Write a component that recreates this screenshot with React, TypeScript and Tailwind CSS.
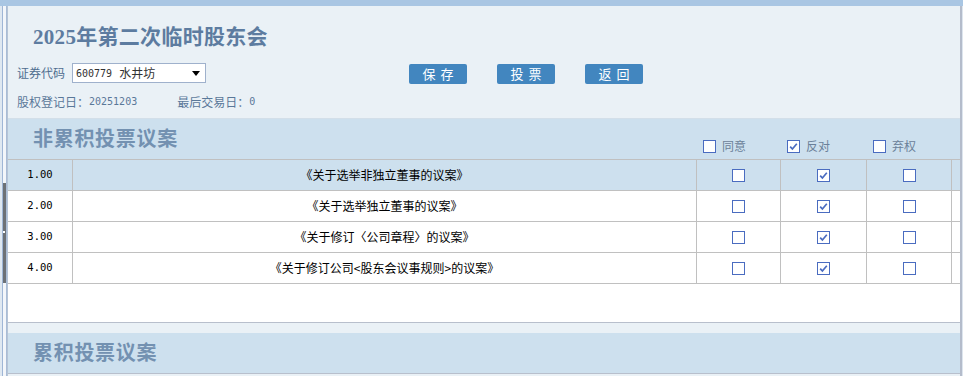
import React from "react";

const CJK = '"Noto Sans CJK SC", "Noto Sans", sans-serif';
const SERIF = '"Liberation Serif", "Noto Sans CJK SC", serif';
const MONO = '"DejaVu Sans Mono", "Noto Sans CJK SC", monospace';

function Box({ checked }: { checked?: boolean }) {
  return (
    <span className="inline-flex w-[13px] h-[13px] border border-[#4a6cc0] bg-white items-center justify-center shrink-0">
      {checked && (
        <svg width="11" height="11" viewBox="0 0 11 11">
          <path d="M2.2 5.6 L4.4 8 L8.8 2.8" fill="none" stroke="#4a6cc0" strokeWidth="1.7" />
        </svg>
      )}
    </span>
  );
}

const rows = [
  { no: "1.00", name: "《关于选举非独立董事的议案》", hl: true },
  { no: "2.00", name: "《关于选举独立董事的议案》" },
  { no: "3.00", name: "《关于修订〈公司章程〉的议案》" },
  { no: "4.00", name: "《关于修订公司<股东会议事规则>的议案》" },
];

const GRID = "grid grid-cols-[65px_624px_84px_86px_85px_8px]";

export default function App() {
  return (
    <div
      className="w-[963px] h-[376px] overflow-hidden bg-[#eaf1f6] flex flex-col"
      style={{ fontFamily: CJK }}
    >
      <div className="h-[6px] bg-[#a9c6e3] shrink-0" />
      <div className="flex flex-1 min-h-0">
        {/* left splitter strip */}
        <div className="w-[7px] flex shrink-0">
          <div className="w-[2px] bg-[#dfe8f1]" />
          <div className="w-[1px] bg-[#9fb6d6]" />
          <div className="w-[3px] bg-[#f3f6fa] flex flex-col">
            <div className="h-[177px] shrink-0" />
            <div className="h-[100px] bg-[#6d7176] flex flex-col items-start">
              <div className="mt-[48px] w-[2px] h-[2px] bg-white" />
            </div>
          </div>
          <div className="w-[1px] bg-[#a9bcd6]" />
        </div>

        {/* main panel */}
        <div className="w-[955px] shrink-0 border-l border-l-[#b6c4d6] border-r-2 border-r-[#b4bccb] flex flex-col">
          {/* top info */}
          <div className="h-[113px] shrink-0 border-b border-[#d3dfe9] flex flex-col">
            <div
              className="pt-[17px] pl-[25px] text-[21px] leading-[28px] font-bold text-[#5d7ca0] tracking-[0.3px]"
              style={{ fontFamily: SERIF }}
            >
              2025年第二次临时股东会
            </div>
            <div className="mt-[12px] flex items-start">
              <span className="pl-[9px] text-[12px] leading-[20px] text-[#4f6d8f]">证券代码</span>
              <div className="ml-[7px] w-[134px] h-[20px] bg-white border border-[#9fb1cc] flex items-center pl-[3px] pr-[5px]">
                <span className="text-[10px] text-[#333]" style={{ fontFamily: MONO }}>600779</span>
                <span className="ml-[7px] text-[12px] text-[#333]">水井坊</span>
                <span className="ml-auto w-0 h-0 border-l-[4px] border-r-[4px] border-t-[5px] border-l-transparent border-r-transparent border-t-black" />
              </div>
              <div className="ml-[203px] mt-[1px] flex gap-[30px]">
                {["保存", "投票", "返回"].map((t) => (
                  <button
                    key={t}
                    className="w-[58px] h-[20px] rounded-[2px] bg-[#4286bf] text-white text-[13px] leading-[20px] tracking-[5px] pl-[5px]"
                  >
                    {t}
                  </button>
                ))}
              </div>
            </div>
            <div className="mt-[10px] pl-[9px] flex items-center text-[12px] leading-[16px] text-[#5a7899]">
              <span>股权登记日：</span>
              <span className="text-[10px]" style={{ fontFamily: MONO }}>20251203</span>
              <span className="ml-[40px]">最后交易日：</span>
              <span className="text-[10px]" style={{ fontFamily: MONO }}>0</span>
            </div>
          </div>

          {/* section header 1 */}
          <div className={`${GRID} h-[41px] shrink-0 bg-[#cde0ee] border-b border-[#c0c0c0]`}>
            <div
              className="col-span-2 self-center pl-[25px] text-[20px] leading-[26px] font-bold text-[#7391b1] tracking-[0.7px]"
              style={{ fontFamily: SERIF }}
            >
              非累积投票议案
            </div>
            {[
              { t: "同意", c: false },
              { t: "反对", c: true },
              { t: "弃权", c: false },
            ].map((x) => (
              <div key={x.t} className="self-end pb-[6px] pl-[6px] flex items-center gap-[6px]">
                <Box checked={x.c} />
                <span className="text-[12px] leading-[14px] text-[#6b8099]">{x.t}</span>
              </div>
            ))}
            <div />
          </div>

          {/* table rows */}
          {rows.map((r) => (
            <div
              key={r.no}
              className={`${GRID} h-[31px] shrink-0 border-b border-[#c0c0c0] ${r.hl ? "bg-[#cde0ee]" : "bg-white"}`}
            >
              <div
                className="border-r border-[#c0c0c0] flex items-center justify-center text-[10.5px] text-black"
                style={{ fontFamily: MONO }}
              >
                {r.no}
              </div>
              <div className="border-r border-[#c0c0c0] flex items-center justify-center text-[12px] text-black">
                {r.name}
              </div>
              <div className="border-r border-[#c0c0c0] flex items-center justify-center">
                <Box />
              </div>
              <div className="border-r border-[#c0c0c0] flex items-center justify-center">
                <Box checked />
              </div>
              <div className="border-r border-[#c0c0c0] flex items-center justify-center">
                <Box />
              </div>
              <div />
            </div>
          ))}

          {/* empty area */}
          <div className="h-[39px] shrink-0 bg-white border-b border-[#b8bfcc]" />
          <div className="h-[10px] shrink-0" />

          {/* section header 2 */}
          <div className="h-[41px] shrink-0 bg-[#cde0ee] border-b border-[#b8bfcc] flex items-center">
            <div
              className="pl-[25px] text-[20px] leading-[26px] font-bold text-[#7391b1] tracking-[0.7px]"
              style={{ fontFamily: SERIF }}
            >
              累积投票议案
            </div>
          </div>
        </div>
        <div className="w-[1px] bg-[#dde5ee] shrink-0" />
      </div>
    </div>
  );
}
